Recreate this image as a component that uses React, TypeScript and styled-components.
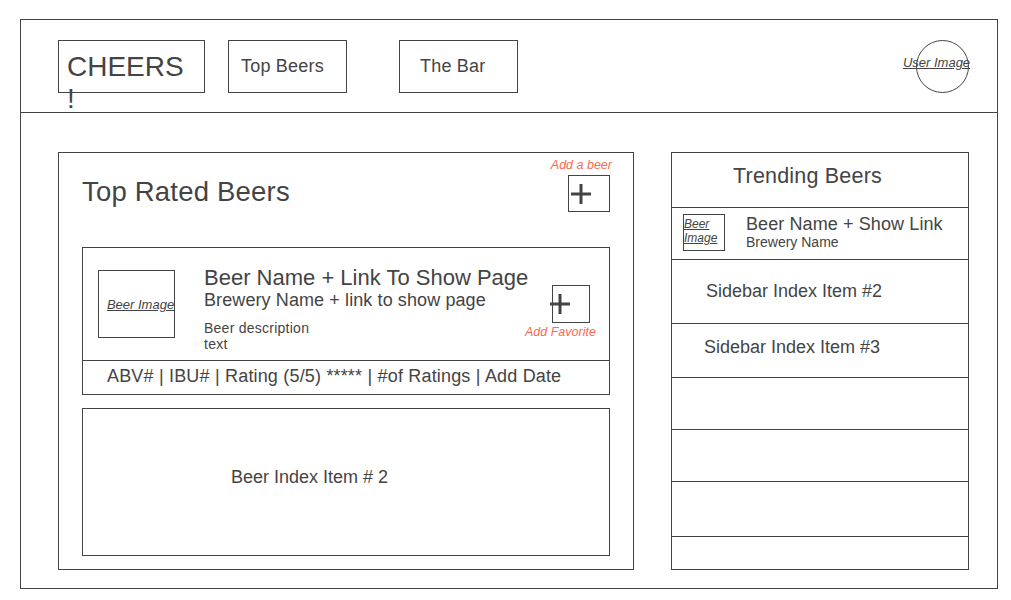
import React from 'react';
import styled, { createGlobalStyle } from 'styled-components';

const ink = '#444444';
const red = '#fa6a50';

const GlobalStyle = createGlobalStyle`
  body {
    margin: 0;
    background: #ffffff;
    font-family: "Liberation Sans", Arial, sans-serif;
    color: ${ink};
  }
`;

const Frame = styled.div`
  margin: 19px 0 0 20px;
  width: 978px;
  height: 570px;
  box-sizing: border-box;
  border: 1px solid ${ink};
  display: flex;
  flex-direction: column;
`;

const Header = styled.header`
  height: 93px;
  box-sizing: border-box;
  border-bottom: 1px solid ${ink};
  display: flex;
  align-items: flex-start;
  padding: 20px 28px 0 37px;
`;

const NavBox = styled.div<{ $w: number; $pl: number; $gap?: number }>`
  width: ${(p) => p.$w}px;
  height: 53px;
  box-sizing: border-box;
  border: 1px solid ${ink};
  margin-right: ${(p) => p.$gap ?? 0}px;
  padding-left: ${(p) => p.$pl}px;
  display: flex;
  align-items: center;
  font-size: 18px;
  letter-spacing: 0.2px;
`;

const Logo = styled.div`
  width: 147px;
  height: 53px;
  box-sizing: border-box;
  border: 1px solid ${ink};
  margin-right: 23px;
  padding: 10px 0 0 8px;
  font-size: 28px;
  line-height: 32px;
  white-space: nowrap;
`;

const Avatar = styled.div`
  margin-left: auto;
  width: 53px;
  height: 53px;
  box-sizing: border-box;
  border: 1px solid ${ink};
  border-radius: 50%;
  display: flex;
  align-items: center;
  justify-content: center;
`;

const Placeholder = styled.span<{ $size?: number }>`
  font-size: ${(p) => p.$size ?? 13}px;
  font-style: italic;
  text-decoration: underline;
  white-space: nowrap;
  color: ${ink};
`;

const Main = styled.main`
  flex: 1;
  display: grid;
  grid-template-columns: 576px 298px;
  column-gap: 37px;
  padding: 39px 28px 18px 37px;
`;

const Panel = styled.section`
  border: 1px solid ${ink};
  padding: 5px 23px 13px 23px;
  display: flex;
  flex-direction: column;
`;

const PanelHead = styled.div`
  display: flex;
  justify-content: space-between;
  align-items: flex-start;
  margin-bottom: 35px;
`;

const Title = styled.h1`
  margin: 18px 0 0 0;
  font-size: 27.5px;
  line-height: 32px;
  letter-spacing: 0.2px;
  font-weight: normal;
`;

const ActionCol = styled.div`
  display: flex;
  flex-direction: column;
  align-items: flex-end;
`;

const RedLabel = styled.span<{ $mr?: number }>`
  color: ${red};
  font-size: 12.5px;
  line-height: 14px;
  font-style: italic;
  white-space: nowrap;
  margin-right: ${(p) => p.$mr ?? 0}px;
`;

const PlusBox = styled.div<{ $w: number; $h: number; $shift: number }>`
  width: ${(p) => p.$w}px;
  height: ${(p) => p.$h}px;
  box-sizing: border-box;
  border: 1px solid ${ink};
  display: flex;
  align-items: center;
  svg {
    margin-left: ${(p) => p.$shift}px;
    flex: none;
  }
`;

const Card = styled.div`
  height: 148px;
  box-sizing: border-box;
  border: 1px solid ${ink};
  display: flex;
  flex-direction: column;
`;

const CardBody = styled.div`
  height: 112px;
  display: flex;
  align-items: flex-start;
  padding-left: 15px;
`;

const ImageBox = styled.div`
  width: 77px;
  height: 68px;
  box-sizing: border-box;
  border: 1px solid ${ink};
  margin-top: 22px;
  display: flex;
  align-items: center;
  justify-content: center;
  padding-left: 8px;
`;

const Info = styled.div`
  flex: 1;
  min-width: 0;
  margin: 18px 0 0 29px;
`;

const BeerName = styled.div`
  font-size: 22px;
  line-height: 24px;
  white-space: nowrap;
`;

const Brewery = styled.div`
  font-size: 18px;
  line-height: 20px;
  letter-spacing: 0.1px;
  white-space: nowrap;
`;

const Description = styled.div`
  margin-top: 10px;
  font-size: 14px;
  line-height: 16px;
  letter-spacing: 0.25px;
`;

const FavCol = styled.div`
  margin: 37px 12px 0 0;
  display: flex;
  flex-direction: column;
  align-items: flex-start;
  width: 72px;
  flex: none;
`;

const FavBox = styled(PlusBox)`
  margin: 0 0 2px 27px;
`;

const StatsRow = styled.div`
  border-top: 1px solid ${ink};
  flex: 1;
  display: flex;
  align-items: center;
  padding: 0 0 3px 24px;
  font-size: 18px;
  letter-spacing: 0.15px;
  word-spacing: 0.15px;
  white-space: pre;
`;

const IndexCard = styled(Card)`
  margin-top: 13px;
  padding: 58px 0 0 148px;
  font-size: 18px;
  line-height: 20px;
`;

const Sidebar = styled.aside`
  border: 1px solid ${ink};
  display: flex;
  flex-direction: column;
`;

const SideRow = styled.div<{ $h?: number; $pl?: number; $pb?: number; $last?: boolean }>`
  height: ${(p) => (p.$h ? `${p.$h}px` : 'auto')};
  flex: ${(p) => (p.$last ? 1 : 'none')};
  box-sizing: border-box;
  border-bottom: ${(p) => (p.$last ? 'none' : `1px solid ${ink}`)};
  padding-left: ${(p) => p.$pl ?? 0}px;
  padding-bottom: ${(p) => p.$pb ?? 0}px;
  display: flex;
  align-items: center;
  font-size: 18px;
  white-space: nowrap;
`;

const SideTitle = styled.div`
  font-size: 21.5px;
  line-height: 24px;
  letter-spacing: 0.2px;
  align-self: flex-start;
  margin-top: 11px;
`;

const Thumb = styled.div`
  width: 42px;
  height: 37px;
  box-sizing: border-box;
  border: 1px solid ${ink};
  align-self: flex-start;
  margin-top: 6px;
  padding-top: 2px;
  display: flex;
  flex-direction: column;
  font-size: 12px;
  line-height: 14px;
`;

const SideInfo = styled.div`
  margin-left: 21px;
  align-self: flex-start;
  margin-top: 5px;
`;

const SideName = styled.div`
  font-size: 18px;
  line-height: 22px;
  letter-spacing: 0.1px;
`;

const SideBrewery = styled.div`
  font-size: 14px;
  line-height: 15px;
`;

const Plus = () => (
  <svg width="22" height="22" viewBox="0 0 22 22">
    <path d="M1 11H21M11 1V21" stroke={ink} strokeWidth="3" fill="none" />
  </svg>
);

export default function App() {
  return (
    <>
      <GlobalStyle />
      <Frame>
        <Header>
          <Logo>
            CHEERS
            <br />!
          </Logo>
          <NavBox $w={119} $pl={12} $gap={52}>Top Beers</NavBox>
          <NavBox $w={119} $pl={20}>The Bar</NavBox>
          <Avatar>
            <Placeholder style={{ marginRight: 12, marginBottom: 8 }}>User Image</Placeholder>
          </Avatar>
        </Header>

        <Main>
          <Panel>
            <PanelHead>
              <Title>Top Rated Beers</Title>
              <ActionCol>
                <RedLabel $mr={-2}>Add a beer</RedLabel>
                <PlusBox $w={42} $h={37} $shift={1} style={{ marginTop: 3 }}>
                  <Plus />
                </PlusBox>
              </ActionCol>
            </PanelHead>

            <Card>
              <CardBody>
                <ImageBox>
                  <Placeholder>Beer Image</Placeholder>
                </ImageBox>
                <Info>
                  <BeerName>Beer Name + Link To Show Page</BeerName>
                  <Brewery>Brewery Name + link to show page</Brewery>
                  <Description>
                    Beer description
                    <br />
                    text
                  </Description>
                </Info>
                <FavCol>
                  <FavBox $w={38} $h={38} $shift={-4}>
                    <Plus />
                  </FavBox>
                  <RedLabel>Add Favorite</RedLabel>
                </FavCol>
              </CardBody>
              <StatsRow>ABV# | IBU# | Rating (5/5) ***** | #of Ratings | Add Date</StatsRow>
            </Card>

            <IndexCard>Beer Index Item # 2</IndexCard>
          </Panel>

          <Sidebar>
            <SideRow $h={55} $pl={61}>
              <SideTitle>Trending Beers</SideTitle>
            </SideRow>
            <SideRow $h={52} $pl={11}>
              <Thumb>
                <Placeholder $size={12}>Beer</Placeholder>
                <Placeholder $size={12}>Image</Placeholder>
              </Thumb>
              <SideInfo>
                <SideName>Beer Name + Show Link</SideName>
                <SideBrewery>Brewery Name</SideBrewery>
              </SideInfo>
            </SideRow>
            <SideRow $h={64} $pl={34} $pb={1}>Sidebar Index Item #2</SideRow>
            <SideRow $h={54} $pl={32} $pb={6}>Sidebar Index Item #3</SideRow>
            <SideRow $h={52} />
            <SideRow $h={52} />
            <SideRow $h={55} />
            <SideRow $last />
          </Sidebar>
        </Main>
      </Frame>
    </>
  );
}
